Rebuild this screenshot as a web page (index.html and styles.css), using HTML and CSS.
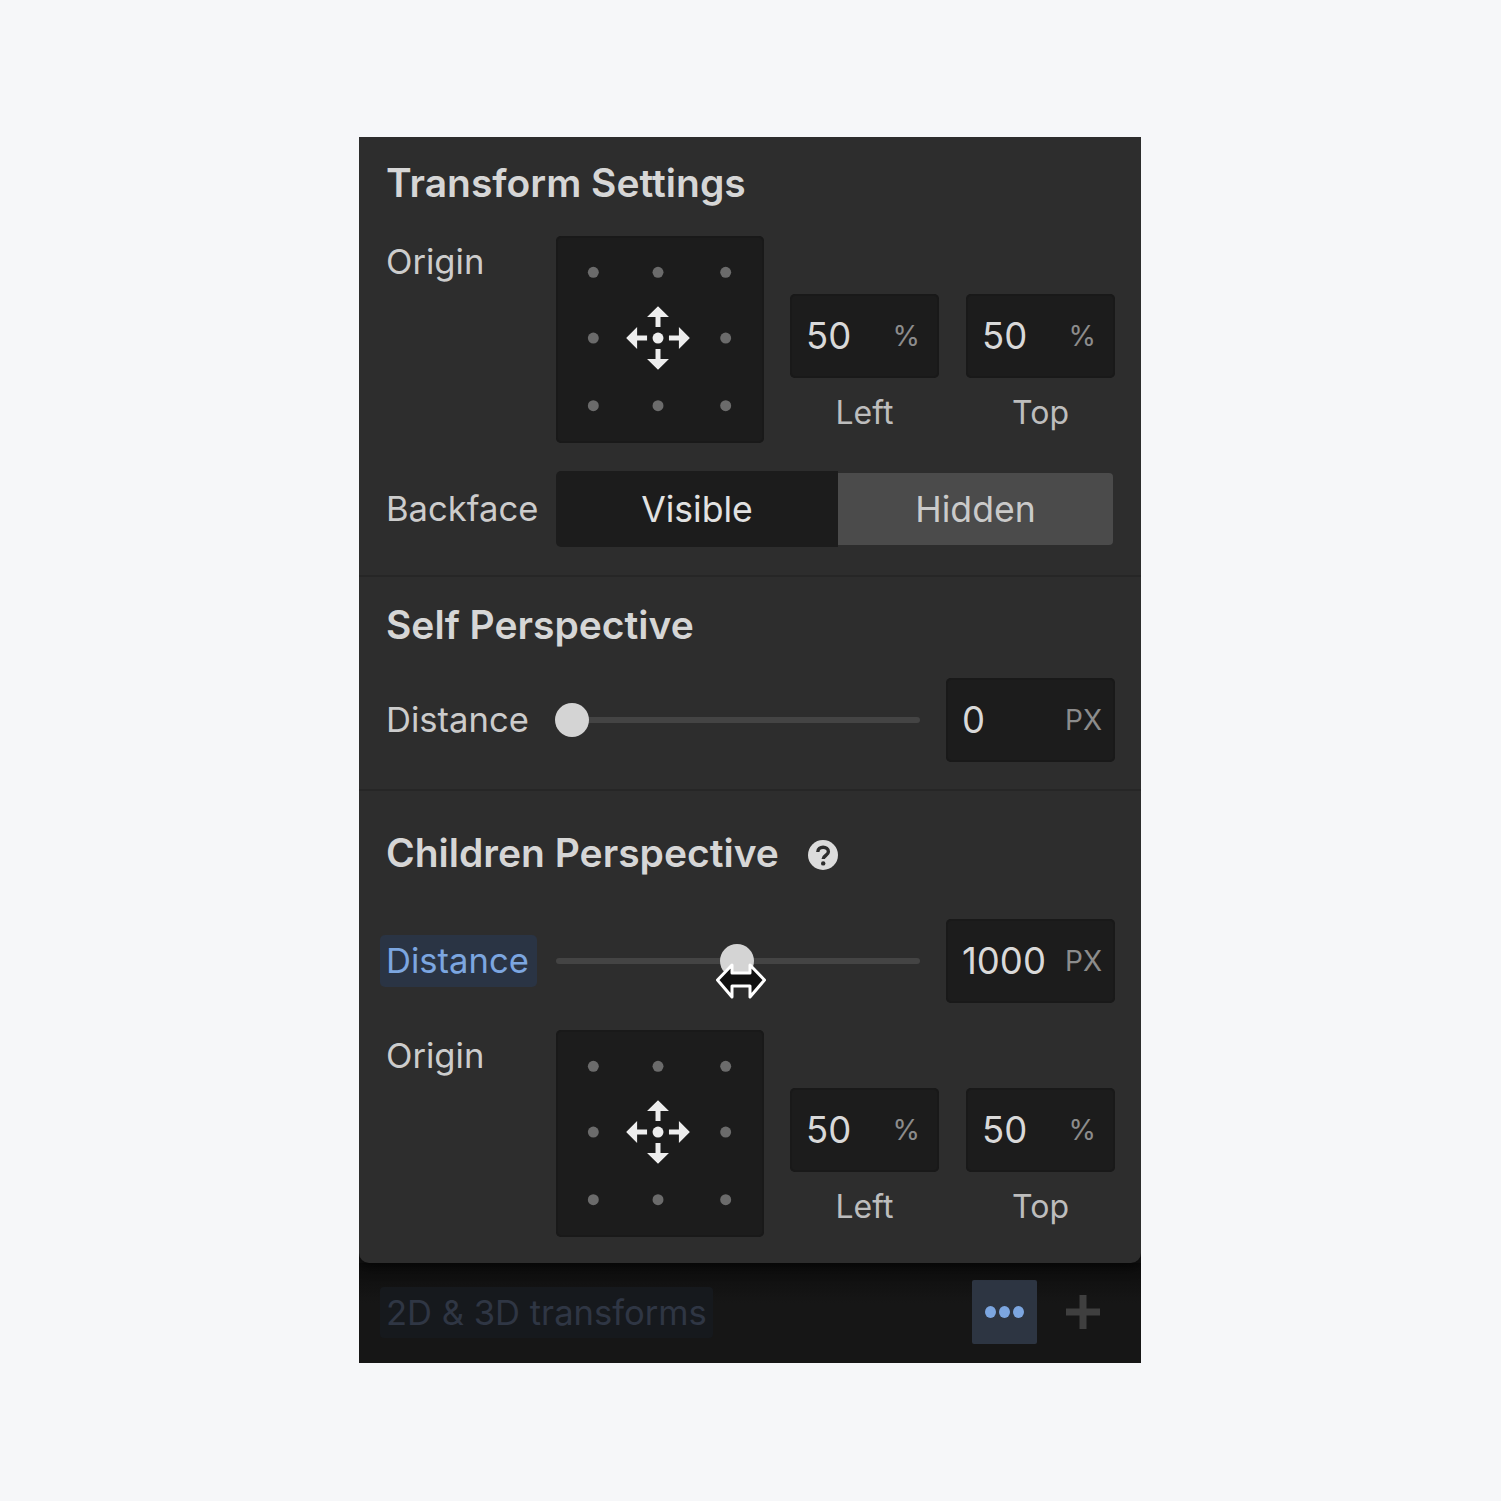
FILE: index.html
```html
<!DOCTYPE html>
<html lang="en">
<head>
  <meta charset="UTF-8">
  <title>Transform Settings</title>
  <link rel="stylesheet" href="styles.css">
</head>
<body>
  <svg class="defs" width="0" height="0">
    <symbol id="origin-pad" viewBox="0 -0.5 208 208">
      <g fill="#6b6b6b">
        <circle cx="37" cy="36" r="5.5"/><circle cx="102" cy="36" r="5.5"/><circle cx="170" cy="36" r="5.5"/>
        <circle cx="37" cy="102" r="5.5"/><circle cx="170" cy="102" r="5.5"/>
        <circle cx="37" cy="170" r="5.5"/><circle cx="102" cy="170" r="5.5"/><circle cx="170" cy="170" r="5.5"/>
      </g>
      <g fill="#eeeeee">
        <circle cx="102" cy="102" r="5.5"/>
        <path d="M102 70 L113 81 L104.5 81 L104.5 91 L99.5 91 L99.5 81 L91 81 Z"/>
        <path d="M102 134 L113 123 L104.5 123 L104.5 113 L99.5 113 L99.5 123 L91 123 Z"/>
        <path d="M70 102 L81 91 L81 99.5 L91 99.5 L91 104.5 L81 104.5 L81 113 Z"/>
        <path d="M134 102 L123 91 L123 99.5 L113 99.5 L113 104.5 L123 104.5 L123 113 Z"/>
      </g>
    </symbol>
  </svg>

  <div class="panel">
    <div class="popup">
      <section class="section section-transform">
        <h2>Transform Settings</h2>
        <div class="origin-row">
          <span class="label">Origin</span>
          <svg class="origin-pad"><use href="#origin-pad"/></svg>
          <div class="origin-fields">
            <div class="field-col">
              <div class="field"><span>50</span><span class="unit">%</span></div>
              <span class="caption">Left</span>
            </div>
            <div class="field-col">
              <div class="field"><span>50</span><span class="unit">%</span></div>
              <span class="caption">Top</span>
            </div>
          </div>
        </div>
        <div class="backface-row">
          <span class="label">Backface</span>
          <div class="toggle">
            <div class="toggle-on">Visible</div>
            <div class="toggle-off">Hidden</div>
          </div>
        </div>
      </section>

      <section class="section section-self">
        <h2>Self Perspective</h2>
        <div class="slider-row">
          <span class="label">Distance</span>
          <div class="slider">
            <div class="track"></div>
            <div class="thumb thumb-start"></div>
          </div>
          <div class="field field-wide"><span>0</span><span class="unit">PX</span></div>
        </div>
      </section>

      <section class="section section-children">
        <div class="title-row">
          <h2>Children Perspective</h2>
          <svg class="help" viewBox="0 0 30 30">
            <circle cx="15" cy="15" r="15" fill="#dcdcdc"/>
            <path d="M9.8 12 C9.8 5.6 20.4 5.8 20.4 11.8 C20.4 15.6 15.2 15.4 15.2 19" fill="none" stroke="#2d2d2d" stroke-width="3.4"/>
            <circle cx="15.2" cy="23.4" r="2.2" fill="#2d2d2d"/>
          </svg>
        </div>
        <div class="slider-row slider-row-active">
          <span class="label label-active">Distance</span>
          <div class="slider">
            <div class="track"></div>
            <div class="thumb thumb-mid"></div>
            <svg class="cursor" viewBox="0 0 52 38">
              <path d="M2.5 18 L17 3 L17 11 L35 11 L35 3 L49.5 18 L35 35 L35 24 L17 24 L17 35 Z" fill="#111" stroke="#fff" stroke-width="3" stroke-linejoin="round"/>
            </svg>
          </div>
          <div class="field field-wide"><span>1000</span><span class="unit">PX</span></div>
        </div>
        <div class="origin-row origin-row-last">
          <span class="label">Origin</span>
          <svg class="origin-pad"><use href="#origin-pad"/></svg>
          <div class="origin-fields">
            <div class="field-col">
              <div class="field"><span>50</span><span class="unit">%</span></div>
              <span class="caption">Left</span>
            </div>
            <div class="field-col">
              <div class="field"><span>50</span><span class="unit">%</span></div>
              <span class="caption">Top</span>
            </div>
          </div>
        </div>
      </section>
    </div>

    <div class="bottom-bar">
      <span class="bar-label">2D &amp; 3D transforms</span>
      <div class="bar-actions">
        <div class="more"><i></i><i></i><i></i></div>
        <svg class="plus" viewBox="0 0 34 34"><path d="M13.5 0 h7 v13.5 h13.5 v7 h-13.5 v13.5 h-7 v-13.5 h-13.5 v-7 h13.5 z" fill="#3f3f3f"/></svg>
      </div>
    </div>
  </div>
</body>
</html>
```

FILE: styles.css
```css
html, body {
  margin: 0;
  padding: 0;
}
body {
  background: #f6f7f9;
  font-family: Inter, "Liberation Sans", sans-serif;
  height: 1501px;
  display: flex;
  flex-direction: column;
  align-items: center;
  padding-top: 137px;
  box-sizing: border-box;
}
.defs {
  position: absolute;
}
.panel {
  width: 782px;
  background: #141414;
  margin-left: -1px;
  overflow: hidden;
}
.popup {
  background: #2d2d2d;
  border-radius: 0 0 10px 10px;
  box-shadow: 0 4px 12px rgba(0,0,0,0.6);
  position: relative;
}
.section {
  padding: 0 26px 0 27px;
}
.section-transform {
  padding-top: 26px;
  padding-bottom: 28px;
  border-bottom: 2px solid #262626;
}
.section-self {
  padding-top: 28px;
  padding-bottom: 27px;
  border-bottom: 2px solid #262626;
}
.section-children {
  padding-top: 42px;
  padding-bottom: 26px;
}
h2 {
  margin: 0;
  font-size: 39px;
  line-height: 40px;
  font-weight: 600;
  color: #d6d6d6;
}
.label {
  font-size: 34.6px;
  line-height: 40px;
  color: #cccccc;
  width: 170px;
  flex: none;
  padding-bottom: 2px;
}
.origin-row {
  display: flex;
  margin-top: 33px;
}
.origin-row .label {
  margin-top: 5px;
}
.origin-row-last {
  margin-top: 27px;
}
.origin-pad {
  width: 208px;
  height: 207px;
  flex: none;
  background: #1c1c1c;
  border-radius: 5px;
  box-shadow: inset 0 0 0 2px #191919;
}
.origin-fields {
  display: flex;
  gap: 27px;
  margin-left: 26px;
  padding-top: 58px;
}
.field-col {
  display: flex;
  flex-direction: column;
  align-items: center;
  width: 149px;
}
.field {
  width: 149px;
  height: 84px;
  box-sizing: border-box;
  background: #1c1c1c;
  border-radius: 5px;
  box-shadow: inset 0 0 0 2px #191919;
  padding: 0 19px 0 16px;
  display: flex;
  align-items: center;
  justify-content: space-between;
  font-size: 36.5px;
  color: #d9d9d9;
}
.unit {
  font-size: 28px;
  color: #8c8c8c;
}
.caption {
  font-size: 32px;
  line-height: 40px;
  color: #bdbdbd;
  margin-top: 15px;
}
.backface-row {
  display: flex;
  align-items: center;
  margin-top: 28px;
}
.toggle {
  display: flex;
  width: 558px;
  height: 76px;
  font-size: 35.6px;
  border-radius: 5px;
  overflow: hidden;
}
.toggle div {
  display: flex;
  align-items: center;
  justify-content: center;
}
.toggle-on {
  width: 282px;
  background: #1c1c1c;
  color: #e2e2e2;
}
.toggle-off {
  width: 275px;
  margin: 2px 0;
  background: #4b4b4b;
  color: #cacaca;
  border-radius: 0 4px 4px 0;
}
.slider-row {
  display: flex;
  align-items: center;
  margin-top: 33px;
}
.slider-row-active {
  margin-top: 46px;
}
.label-active {
  color: #7ca6e0;
  background: #2a3444;
  border-radius: 5px;
  padding: 5px 6px 7px;
  margin-left: -6px;
  width: 157px;
  margin-right: 19px;
  box-sizing: border-box;
  white-space: nowrap;
}
.slider {
  position: relative;
  width: 364px;
  height: 34px;
  margin-right: 26px;
  flex: none;
  display: flex;
  align-items: center;
}
.track {
  width: 100%;
  height: 6px;
  background: #444;
  border-radius: 3px;
}
.thumb {
  position: absolute;
  width: 34px;
  height: 34px;
  border-radius: 50%;
  background: #d4d4d4;
  top: 0;
}
.thumb-start {
  left: -1px;
}
.thumb-mid {
  left: 164px;
}
.cursor {
  position: absolute;
  left: 159px;
  top: 18px;
  width: 52px;
  height: 38px;
}
.field-wide {
  width: 169px;
  padding: 0 13px 0 16px;
}
.title-row {
  display: flex;
  align-items: center;
  gap: 29px;
}
.help {
  width: 30px;
  height: 30px;
  margin-top: 4px;
}
.bottom-bar {
  height: 100px;
  box-sizing: border-box;
  display: flex;
  align-items: center;
  justify-content: space-between;
  padding: 0 41px 2px 21px;
  background: linear-gradient(#0d0d0d, #161616 40%);
}
.bar-label {
  font-size: 34.6px;
  line-height: 51px;
  color: #2f3644;
  background: #16191d;
  padding: 0 6px 0 6px;
  border-radius: 4px;
}
.bar-actions {
  display: flex;
  align-items: center;
  gap: 29px;
}
.more {
  width: 65px;
  height: 64px;
  background: #2d3542;
  border-radius: 2px;
  display: flex;
  align-items: center;
  justify-content: center;
  gap: 3px;
}
.more i {
  width: 11px;
  height: 12px;
  border-radius: 50%;
  background: #7ca6e0;
}
.plus {
  width: 34px;
  height: 34px;
}
```
